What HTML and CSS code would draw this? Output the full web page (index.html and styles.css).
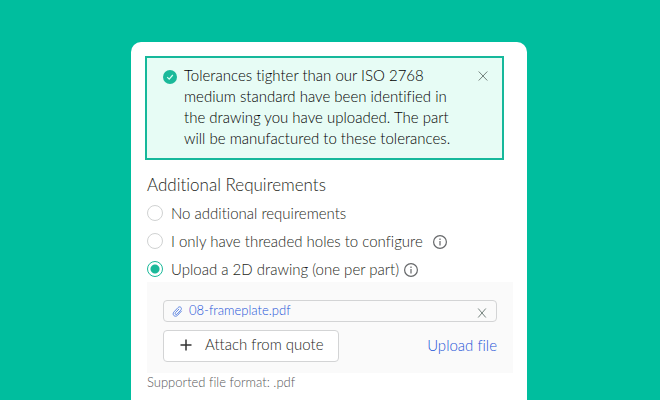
FILE: index.html
```html
<!DOCTYPE html>
<html lang="en">
<head>
<meta charset="utf-8">
<title>Additional Requirements</title>
<link rel="stylesheet" href="styles.css">
</head>
<body>
<main class="card">
  <div class="alert" role="status">
    <svg class="alert-icon" viewBox="0 0 14 14" aria-hidden="true"><circle cx="7" cy="7" r="7" fill="#1bb99a"/><path d="M4.2 7.2l2 2 3.6-4.2" fill="none" stroke="#d9fff4" stroke-width="1.2"/></svg>
    <p class="alert-text">Tolerances tighter than our ISO 2768 medium standard have been identified in the drawing you have uploaded. The part will be manufactured to these tolerances.</p>
    <button class="close alert-close" type="button" aria-label="Dismiss"><svg viewBox="0 0 10 10"><path d="M.7.5l8.6 9M9.3.5l-8.6 9"/></svg></button>
  </div>
  <form class="form">
    <fieldset class="options">
      <legend class="title">Additional Requirements</legend>
      <div class="option"><input class="radio" type="radio" name="req" id="none"><label for="none">No additional requirements</label></div>
      <div class="option"><input class="radio" type="radio" name="req" id="holes"><label for="holes">I only have threaded holes to configure</label>
        <svg class="info info-wide" viewBox="0 0 14 14" aria-hidden="true"><circle cx="7" cy="7" r="6.4"/><path d="M7 6v4.500M7 3.500v1.400"/></svg></div>
      <div class="option"><input class="radio" type="radio" name="req" id="drawing" checked><label for="drawing">Upload a 2D drawing (one per part)</label>
        <svg class="info" viewBox="0 0 14 14" aria-hidden="true"><circle cx="7" cy="7" r="6.4"/><path d="M7 6v4.500M7 3.500v1.400"/></svg></div>
    </fieldset>
    <div class="panel">
      <div class="file">
        <svg class="clip" viewBox="0 0 12 12" aria-hidden="true"><path d="M10.6 5.3L6.2 10.1C4.9 11.5 3 11.4 2 10.4S1 7.700 2.200 6.400L6.600 1.700C7.500.7 8.900.7 9.700 1.500S10.500 3.500 9.600 4.500L5.500 8.900C5 9.400 4.300 9.500 3.800 9S3.400 7.800 3.900 7.200L7.700 3.200"/></svg>
        <a class="file-name" href="#">08-frameplate.pdf</a>
        <button class="close file-close" type="button" aria-label="Remove file"><svg viewBox="0 0 10 10"><path d="M1.200.5l7.600 9M8.800.5l-7.600 9"/></svg></button>
      </div>
      <div class="actions">
        <button class="attach" type="button"><svg class="plus" viewBox="0 0 12 12" aria-hidden="true"><path d="M6 .5v11M.5 6h11"/></svg>Attach from quote</button>
        <a class="upload" href="#">Upload file</a>
      </div>
    </div>
    <p class="hint">Supported file format: .pdf</p>
  </form>
</main>
</body>
</html>
```
FILE: styles.css
```css
* { box-sizing: border-box; }

body {
  display: flex;
  min-height: 100vh;
  margin: 0;
  padding: 42px 133px 0 131px;
  background: #00be9e;
  color: #1e1f21;
  font: 300 15px/21px Lato, "Open Sans", sans-serif;
  font-variant-ligatures: none;
}

p { margin: 0; }
a { color: #1f55d8; text-decoration: none; }
button { font: inherit; color: inherit; font-variant-ligatures: inherit; }

.card {
  flex: 1;
  padding: 14px 14px 0;
  background: #fff;
  border-radius: 10px 10px 0 0;
}

.alert {
  display: flex;
  align-items: flex-start;
  margin-right: 9px;
  padding: 7px 14px 9px 16px;
  background: #e7fcf5;
  border: 2px solid #16b89b;
  color: #000;
}
.alert-icon { flex: none; width: 14px; height: 14px; margin: 5px 7px 0 0; }
.alert-text { flex: 1; padding-right: 20px; }

.close {
  display: flex;
  padding: 0;
  background: none;
  border: 0;
}
.close svg {
  width: 10px;
  height: 10px;
  fill: none;
  stroke: #74827d;
  stroke-width: 1;
}
.alert-close { margin-top: 6px; }

.form { padding: 0 0 0 2px; }

.options {
  display: flex;
  flex-direction: column;
  gap: 2px;
  min-width: 0;
  margin: 14px 0 0;
  padding: 0;
  border: 0;
}
.title { margin-bottom: 4px; padding: 0; font-size: 17px; line-height: 22px; }

.option {
  display: flex;
  align-items: center;
  height: 26px;
}
.option label { padding-top: 1px; }
.radio {
  appearance: none;
  flex: none;
  width: 16px;
  height: 16px;
  margin: 0 8px 0 0;
  background: #fff;
  border: 1px solid #d0d2d2;
  border-radius: 50%;
}
.radio:checked {
  border-color: #1bb99a;
  background: radial-gradient(circle, #1bb99a 4px, #fff 5px);
}
.info {
  width: 14px;
  height: 14px;
  margin: 2px 0 0 5px;
  fill: none;
  stroke: #66686a;
  stroke-width: 1.2;
}
.info-wide { margin-left: 10px; }

.panel {
  padding: 18px 16px 11px;
  background: #fafafa;
}
.file {
  display: flex;
  align-items: center;
  height: 22px;
  padding: 0 9px 0 8px;
  border: 1px solid #d3d4d5;
  border-radius: 4px;
}
.clip { width: 11px; height: 11px; margin-right: 6px; fill: none; stroke: #557fe0; stroke-width: 1; }
.file-name { flex: 1; padding-bottom: 2px; font-size: 13px; line-height: 18px; }
.file-close { padding-top: 4px; }

.actions {
  display: flex;
  align-items: center;
  justify-content: space-between;
  margin-top: 8px;
}
.attach {
  display: flex;
  align-items: center;
  height: 32px;
  padding: 0 14px 3px 16px;
  background: #fff;
  border: 1px solid #d3d4d5;
  border-radius: 4px;
}
.plus { width: 12px; height: 12px; margin-right: 13px; fill: none; stroke: #333; stroke-width: 1.5; }
.upload { padding-bottom: 2px; }
.hint { color: #58595b; font-size: 13px; line-height: 18px; }
```
